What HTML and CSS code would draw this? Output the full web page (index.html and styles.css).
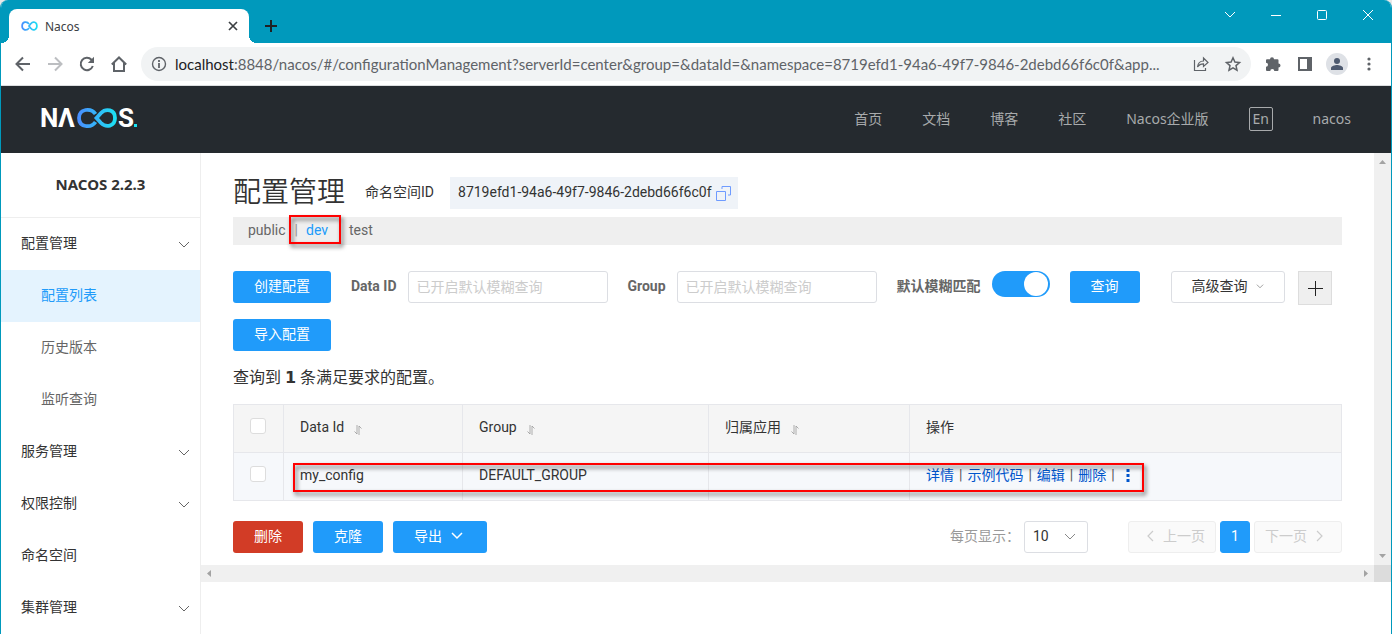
FILE: index.html
```html
<!DOCTYPE html>
<html lang="zh-CN">
<head>
<meta charset="utf-8">
<title>Nacos</title>
<link rel="stylesheet" href="styles.css">
</head>
<body>
<svg class="defs" width="0" height="0" aria-hidden="true">
  <defs>
    <linearGradient id="loop" gradientUnits="userSpaceOnUse" x1="36" y1="0" x2="76" y2="0"><stop offset="0" stop-color="#4b8bff"/><stop offset="1" stop-color="#1be3f2"/></linearGradient>
    <linearGradient id="tabloop" gradientUnits="userSpaceOnUse" x1="0" y1="0" x2="17" y2="0"><stop offset="0" stop-color="#4b8bff"/><stop offset="1" stop-color="#1be3f2"/></linearGradient>
  </defs>
  <symbol id="chevron" viewBox="0 0 12 8"><path d="M1 1l5 5 5-5" fill="none" stroke="currentColor"/></symbol>
  <symbol id="sort" viewBox="0 0 8 10"><path d="M3 0v9L.5 6.500M5 10V1l2.500 2.500" fill="none" stroke="currentColor" stroke-width=".8"/></symbol>
</svg>
<div class="window">
  <div class="titlebar">
    <div class="tab">
      <svg width="17" height="10" viewBox="0 0 17 10"><path d="M8 3C6-.2 1.100.6 1.100 5S6 10.200 8 7M8 5l2-2.500c2-2.500 5.900-1.500 5.900 2.500s-3.900 5-5.900 2.500z" fill="none" stroke="url(#tabloop)" stroke-width="1.700"/></svg>
      <span class="tab-name">Nacos</span>
      <button class="plain" aria-label="Close tab"><svg width="10" height="10" viewBox="0 0 10 10"><path d="M1 1l8 8M9 1L1 9" stroke="#3c4043" stroke-width="1.700"/></svg></button>
    </div>
    <button class="plain new-tab" aria-label="New tab"><svg width="12" height="12" viewBox="0 0 12 12"><path d="M6 0v12M0 6h12" stroke="#202124" stroke-width="2"/></svg></button>
    <div class="caption">
      <button class="plain" aria-label="Search tabs"><svg width="12" height="8" viewBox="0 0 12 8"><path d="M1 1l5 5 5-5" fill="none" stroke="#fff"/></svg></button>
      <button class="plain" aria-label="Minimize"><svg width="10" height="10" viewBox="0 0 10 10"><path d="M0 5.500h10" stroke="#fff"/></svg></button>
      <button class="plain" aria-label="Maximize"><svg width="10" height="10" viewBox="0 0 10 10"><rect x=".5" y=".5" width="9" height="9" rx="1" fill="none" stroke="#fff"/></svg></button>
      <button class="plain" aria-label="Close"><svg width="10" height="10" viewBox="0 0 10 10"><path d="M0 0l10 10M10 0L0 10" stroke="#fff"/></svg></button>
    </div>
  </div>
  <div class="toolbar">
    <div class="nav-buttons">
      <button class="plain" aria-label="Back"><svg width="16" height="16" viewBox="0 0 16 16"><path d="M15 8H2M8 1.500L1.500 8 8 14.500" fill="none" stroke="#5f6368" stroke-width="2"/></svg></button>
      <button class="plain" aria-label="Forward"><svg width="16" height="16" viewBox="0 0 16 16"><path d="M1 8h13M8 1.500L14.500 8 8 14.500" fill="none" stroke="#bcbec1" stroke-width="2"/></svg></button>
      <button class="plain" aria-label="Reload"><svg width="16" height="16" viewBox="0 0 16 16"><path d="M13.800 10A6.200 6.200 0 1 1 12.500 3.700L14 5" fill="none" stroke="#5f6368" stroke-width="2"/><path d="M15 .8V7H8.800z" fill="#5f6368"/></svg></button>
      <button class="plain" aria-label="Home"><svg width="16" height="16" viewBox="0 0 16 16"><path d="M.8 8.500L8 1.500l7.200 7M3 7v8h10V7" fill="none" stroke="#5f6368" stroke-width="2"/></svg></button>
    </div>
    <div class="address">
      <svg width="16" height="16" viewBox="0 0 16 16"><circle cx="8" cy="8" r="6.500" fill="none" stroke="#5f6368" stroke-width="1.400"/><path d="M8 7v5M8 4v2" stroke="#5f6368" stroke-width="1.800"/></svg>
      <span class="url"><b>localhost</b>:8848/nacos/#/configurationManagement?serverId=center&amp;group=&amp;dataId=&amp;namespace=8719efd1-94a6-49f7-9846-2debd66f6c0f&amp;app...</span>
      <button class="plain share" aria-label="Share"><svg width="16" height="16" viewBox="0 0 16 16"><path d="M1.500 4v10.500h11V12M4.500 11c.5-4 3-6 6-6V2l4.500 4.500-4.500 4V7.800c-3 0-4.600 1-6 3.200z" fill="none" stroke="#5f6368" stroke-width="1.200"/></svg></button>
      <button class="plain" aria-label="Bookmark"><svg width="16" height="16" viewBox="0 0 16 16"><path d="M8 1.800l1.900 4.300 4.600.4-3.500 3.100 1 4.600L8 11.800l-4 2.400 1-4.600L1.500 6.500l4.600-.4z" fill="none" stroke="#5f6368" stroke-width="1.500"/></svg></button>
    </div>
    <div class="tools">
      <button class="plain" aria-label="Extensions"><svg width="16" height="16" viewBox="0 0 16 16"><path d="M5 3.200a2 2 0 0 1 4 0h3.500a1 1 0 0 1 1 1V7.500a2 2 0 0 1 0 4V14a1 1 0 0 1-1 1H9.300a2 2 0 0 0-4 0H2a1 1 0 0 1-1-1v-3.200a2 2 0 0 0 0-4V4.200a1 1 0 0 1 1-1z" fill="#5f6368"/></svg></button>
      <button class="plain" aria-label="Side panel"><svg width="14" height="14" viewBox="0 0 14 14"><path d="M0 0h14v14H0zM2 2v10h7V2z" fill="#5f6368" fill-rule="evenodd"/></svg></button>
      <button class="plain" aria-label="Profile"><svg width="22" height="22" viewBox="0 0 22 22"><circle cx="11" cy="11" r="11" fill="#dee1e6"/><circle cx="11" cy="8" r="3" fill="#4d5a70"/><path d="M5 17v-2c0-2 4-3 6-3s6 1 6 3v2z" fill="#4d5a70"/></svg></button>
      <button class="plain" aria-label="Menu"><svg width="4" height="14" viewBox="0 0 4 14"><g fill="#5f6368"><circle cx="2" cy="2" r="1.600"/><circle cx="2" cy="7" r="1.600"/><circle cx="2" cy="12" r="1.600"/></g></svg></button>
    </div>
  </div>

  <header class="header">
    <a href="#" class="logo" aria-label="Nacos">
      <svg width="98" height="22" viewBox="0 0 98 22"><g class="logo-text" fill="#fff"><text x="-1" y="20">N</text><text x="17" y="20">Λ</text><text x="77" y="20">S</text></g><path d="M54.500 7C50 .5 38 1.500 38 11s12 10.500 16.500 4M55.500 11l4.500-5c5-5 14-3.500 14 5s-9 10-14 5z" fill="none" stroke="url(#loop)" stroke-width="3.800"/><rect x="93" y="17" width="3" height="3" fill="#1be3f2"/></svg>
    </a>
    <nav class="topnav">
      <a href="#">首页</a><a href="#">文档</a><a href="#">博客</a><a href="#">社区</a><a href="#">Nacos企业版</a>
      <button class="lang">En</button>
      <a href="#">nacos</a>
    </nav>
  </header>

  <div class="body">
    <aside class="sidebar">
      <h2 class="version">NACOS 2.2.3</h2>
      <nav class="menu">
        <a href="#">配置管理<svg width="12" height="8"><use href="#chevron"/></svg></a>
        <a href="#" class="sub active">配置列表</a>
        <a href="#" class="sub">历史版本</a>
        <a href="#" class="sub">监听查询</a>
        <a href="#">服务管理<svg width="12" height="8"><use href="#chevron"/></svg></a>
        <a href="#">权限控制<svg width="12" height="8"><use href="#chevron"/></svg></a>
        <a href="#">命名空间</a>
        <a href="#">集群管理<svg width="12" height="8"><use href="#chevron"/></svg></a>
      </nav>
    </aside>
    <div class="viewport">
      <main class="content">
        <div class="heading">
          <h1>配置管理</h1>
          <span>命名空间ID</span>
          <span class="ns-id">8719efd1-94a6-49f7-9846-2debd66f6c0f
            <button class="plain" aria-label="Copy"><svg width="15" height="15" viewBox="0 0 15 15"><path d="M.5 5.500h9v9h-9zM6 3V.5h8.500V9H12" fill="none" stroke="#6e9bff"/></svg></button></span>
        </div>
        <div class="namespaces">
          <a href="#">public</a><span class="bar">|</span><a href="#" class="current">dev<i class="mark mark-ns"></i></a><a href="#">test</a>
        </div>
        <form class="filters">
          <button type="button" class="btn primary">创建配置</button>
          <div class="field"><label for="data-id">Data ID</label><input id="data-id" class="text" placeholder="已开启默认模糊查询"></div>
          <div class="field"><label for="group">Group</label><input id="group" class="text" placeholder="已开启默认模糊查询"></div>
          <div class="field"><label for="fuzzy">默认模糊匹配</label><input id="fuzzy" type="checkbox" class="switch" checked></div>
          <button type="button" class="btn primary">查询</button>
          <div class="extra">
            <button type="button" class="btn advanced">高级查询<svg width="8" height="5"><use href="#chevron"/></svg></button>
            <button type="button" class="add" aria-label="Add"><svg width="16" height="16" viewBox="0 0 16 16"><path d="M8.500 1v15M1 8.500h15" stroke="#222"/></svg></button>
          </div>
        </form>
        <button type="button" class="btn primary">导入配置</button>
        <p class="count">查询到 <b>1</b> 条满足要求的配置。</p>
        <div class="table-wrap">
          <table>
            <colgroup><col class="c-check"><col class="c-id"><col class="c-group"><col class="c-app"><col></colgroup>
            <thead><tr>
              <th><input type="checkbox" class="check" aria-label="Select all"></th>
              <th>Data Id<svg class="sort" width="8" height="10"><use href="#sort"/></svg></th>
              <th>Group<svg class="sort" width="8" height="10"><use href="#sort"/></svg></th>
              <th>归属应用<svg class="sort" width="8" height="10"><use href="#sort"/></svg></th>
              <th>操作</th>
            </tr></thead>
            <tbody><tr>
              <td><input type="checkbox" class="check" aria-label="Select my_config"></td>
              <td>my_config</td><td>DEFAULT_GROUP</td><td></td>
              <td><div class="actions"><a href="#">详情</a><i>|</i><a href="#">示例代码</a><i>|</i><a href="#">编辑</a><i>|</i><a href="#">删除</a><i>|</i><button class="plain more" aria-label="More"><svg width="4" height="14" viewBox="0 0 4 14"><path d="M.5 1h3v3h-3zM.5 6h3v3h-3zM.5 11h3v3h-3z" fill="#0055cc"/></svg></button></div></td>
            </tr></tbody>
          </table>
          <i class="mark mark-row"></i>
        </div>
        <div class="footer">
          <button class="btn danger">删除</button>
          <button class="btn primary">克隆</button>
          <button class="btn primary export">导出<svg width="12" height="8" viewBox="0 0 12 8"><path d="M1 1l5 5 5-5" fill="none" stroke="currentColor" stroke-width="1.500"/></svg></button>
          <div class="pager">
            <label for="size">每页显示：</label>
            <span class="select"><select id="size"><option>10</option></select><svg width="12" height="8"><use href="#chevron"/></svg></span>
            <div class="pages">
              <button class="page step prev" disabled><svg width="8" height="12" viewBox="0 0 8 12"><path d="M7 1L2 6l5 5" fill="none" stroke="currentColor" stroke-width="1.200"/></svg>上一页</button>
              <button class="page now">1</button>
              <button class="page step next" disabled>下一页<svg width="8" height="12" viewBox="0 0 8 12"><path d="M1 1l5 5-5 5" fill="none" stroke="currentColor" stroke-width="1.200"/></svg></button>
            </div>
          </div>
        </div>
      </main>
      <div class="vscroll"><svg width="7" height="4" viewBox="0 0 7 4"><path d="M0 4L3.500 0 7 4z"/></svg><svg width="7" height="4" viewBox="0 0 7 4"><path d="M0 0h7L3.500 4z"/></svg></div>
      <div class="hscroll"><svg width="4" height="7" viewBox="0 0 4 7"><path d="M4 0v7L0 3.500z"/></svg><svg width="4" height="7" viewBox="0 0 4 7"><path d="M0 0l4 3.500L0 7z"/></svg></div>
      <div class="corner"></div>
    </div>
  </div>
</div>
</body>
</html>
```
FILE: styles.css
```css
* { box-sizing: border-box; }
body { margin: 0; background: #e8e8e8; color: #333; font: 14px/20px Roboto, "Noto Sans CJK SC", sans-serif; }
a { color: inherit; text-decoration: none; }
svg { display: block; flex: none; overflow: visible; }
.defs { position: absolute; }
button, input, select { font: inherit; color: inherit; margin: 0; }
button { cursor: pointer; }
.plain { display: flex; align-items: center; justify-content: center; padding: 0; border: 0; background: none; }

.window { min-height: 100vh; display: flex; flex-direction: column; border: solid #0099bc; border-width: 0 1px; border-radius: 8px 8px 0 0; background: #fff; overflow: hidden; }
.titlebar { height: 43px; display: flex; background: #0099bc; padding-left: 8px; }
.tab { position: relative; width: 240px; height: 34px; margin-top: 9px; padding: 0 11px 0 12px; display: flex; align-items: center; gap: 7px; background: #fff; border-radius: 8px 8px 0 0; font: 12px/18px "Noto Sans", sans-serif; color: #3c4043; }
.tab::before, .tab::after { content: ""; position: absolute; bottom: 0; width: 8px; height: 8px; }
.tab::before { right: 100%; background: radial-gradient(circle at 0 0, transparent 8px, #fff 8px); }
.tab::after { left: 100%; background: radial-gradient(circle at 100% 0, transparent 8px, #fff 8px); }
.tab-name { flex: 1; padding-top: 2px; }
.new-tab { width: 28px; height: 28px; margin: 12px 0 0 8px; }
.caption { margin-left: auto; display: flex; height: 30px; }
.caption button { width: 46px; }

.toolbar { height: 43px; display: flex; align-items: center; border-bottom: 1px solid #dcdee0; padding-right: 20px; }
.nav-buttons { display: flex; gap: 16px; padding: 0 14px; }
.address { flex: 1; min-width: 0; height: 34px; display: flex; align-items: center; gap: 8px; padding: 0 10px; border-radius: 17px; background: #f1f3f4; }
.url { flex: 1; min-width: 0; overflow: hidden; white-space: nowrap; font: 15px/22px Lato, sans-serif; color: #5f6368; }
.url b { font-weight: 400; color: #202124; }
.share { margin-right: 8px; }
.tools { display: flex; align-items: center; gap: 17px; margin-left: 14px; }
.tools button:nth-child(3) { margin: 0 -3px; }
.tools button:last-child { margin-left: 5px; }

.header { height: 67px; display: flex; align-items: center; justify-content: space-between; padding: 0 40px 2px; background: #252a2f; }
.logo { padding-bottom: 2px; }
.logo-text { font: 700 26px Roboto, sans-serif; }
.topnav { display: flex; align-items: center; gap: 40px; font-family: "Noto Sans", "Noto Sans CJK SC", sans-serif; color: #a8aaac; }
.lang { width: 24px; height: 24px; padding: 0; border: 1px solid #a8aaac; border-radius: 2px; background: none; line-height: 20px; }

.body { flex: 1; display: flex; }
.sidebar { width: 200px; flex: none; border-right: 1px solid #eee; }
.version { margin: 0; height: 65px; border-bottom: 1px solid #eee; text-align: center; font: bold 15px/62px "Noto Sans", sans-serif; }
.menu a { height: 52px; display: flex; align-items: center; justify-content: space-between; padding: 0 10px 2px 20px; }
.menu svg { margin-top: 4px; color: #666; }
.menu .sub { padding-left: 40px; color: #666; }
.menu .active { background: #e4f3fe; color: #209bfa; }

.viewport { flex: 1; min-width: 0; display: grid; grid-template-columns: 1fr 17px; grid-template-rows: auto 17px; align-content: start; }
.content { min-width: 0; padding: 24px 32px 12px; }
.heading { display: flex; align-items: center; }
.heading h1 { margin: 0 20px 0 0; font-size: 28px; line-height: 32px; font-weight: 350; }
.heading span { padding-bottom: 2px; }
.heading .ns-id { display: flex; align-items: center; gap: 4px; height: 32px; margin-left: 16px; padding: 0 7px 2px 8px; background: #eff3f8; }
.ns-id svg { margin-top: 2px; }
.namespaces { display: flex; height: 28px; align-items: center; margin-top: 8px; padding: 0 0 2px 15px; background: #efefef; color: #666; }
.bar { margin: 0 8px 0 9px; color: #999; }
.current { position: relative; margin-right: 21px; color: #209bfa; }
.mark { position: absolute; border: 2px solid #f00; filter: drop-shadow(2px 3px 2px rgba(0, 0, 0, .6)); pointer-events: none; }
.mark-ns { inset: -5px -13px -4px -17px; }
.filters { display: flex; align-items: flex-start; gap: 20px; margin: 26px 0 14px; }
.btn { height: 32px; display: inline-flex; align-items: center; justify-content: center; gap: 8px; padding: 0 20px 2px; border: 1px solid transparent; border-radius: 3px; white-space: nowrap; }
.primary { background: #209bfa; color: #fff; }
.danger { background: #d23c26; color: #fff; }
.field { display: flex; align-items: flex-start; gap: 11px; }
.field label { line-height: 30px; font-weight: 700; color: #666; white-space: nowrap; }
.text { width: 200px; height: 32px; padding: 0 8px; border: 1px solid #dcdee3; border-radius: 3px; outline: 0; background: #fff; }
.text::placeholder { color: #ccc; opacity: 1; }
.switch { appearance: none; width: 58px; height: 26px; border-radius: 13px; background: #209bfa; padding: 1px 2px; }
.switch::before { content: ""; display: block; width: 24px; height: 24px; margin-left: auto; border-radius: 50%; background: #fff; }
.extra { display: flex; gap: 13px; margin-left: 11px; }
.advanced { border-color: #dcdee3; background: #fff; }
.advanced svg { color: #666; }
.add { width: 34px; height: 34px; padding: 0 8px; border: 1px solid #ddd; background: #efefef; }
.count { margin: 15px 0 14px; font-size: 16px; line-height: 24px; }
.count b { font-family: "DejaVu Sans", sans-serif; }

.table-wrap { position: relative; }
table { width: 100%; table-layout: fixed; border-collapse: collapse; }
.c-check { width: 50px; } .c-id { width: 179px; } .c-group { width: 246px; } .c-app { width: 201px; }
th, td { height: 48px; padding: 0 16px 4px; border: 1px solid #e6e7eb; text-align: left; font-weight: 400; }
th { background: #f5f5f5; }
td { background: #f6f8fb; }
.check { appearance: none; display: block; width: 16px; height: 16px; margin-bottom: 2px; border: 1px solid #ddd; border-radius: 3px; background: #fff; }
.sort { display: inline-block; margin-left: 10px; vertical-align: -3px; color: #999; }
.actions { display: flex; align-items: center; color: #0055cc; }
.actions i { margin: 0 5px; font-style: normal; color: #555; }
.more { width: 16px; }
.mark-row { left: 60px; right: 198px; bottom: 9px; height: 29px; }

.footer { display: flex; align-items: center; gap: 10px; margin-top: 20px; }
.export { gap: 9px; padding-right: 23px; }
.pager { display: flex; align-items: center; margin-left: auto; white-space: nowrap; }
.pager label { padding-bottom: 2px; color: #999; }
.select { position: relative; margin: 0 40px 0 4px; }
.select select { appearance: none; display: block; width: 64px; height: 32px; padding: 0 8px 2px; border: 1px solid #dcdee3; border-radius: 3px; background: #fff; }
.select svg { position: absolute; right: 12px; top: 12px; color: #888; pointer-events: none; }
.pages { display: flex; gap: 4px; }
.page { height: 32px; display: flex; align-items: center; justify-content: center; gap: 9px; border: 1px solid #eee; border-radius: 3px; padding: 0 10px 2px; background: #fafafa; color: #ccc; }
.step { width: 88px; }
.prev { justify-content: flex-end; }
.next { justify-content: flex-start; }
.now { width: 30px; border-color: #209bfa; background: #209bfa; color: #fff; }

.vscroll, .hscroll { display: flex; align-items: center; justify-content: space-between; background: #f0f0f0; }
.vscroll { flex-direction: column; padding: 7px 0; }
.hscroll { padding: 0 6px; }
.vscroll path, .hscroll path { fill: #a3a3a3; }
.corner { background: #dcdcdc; }
```
